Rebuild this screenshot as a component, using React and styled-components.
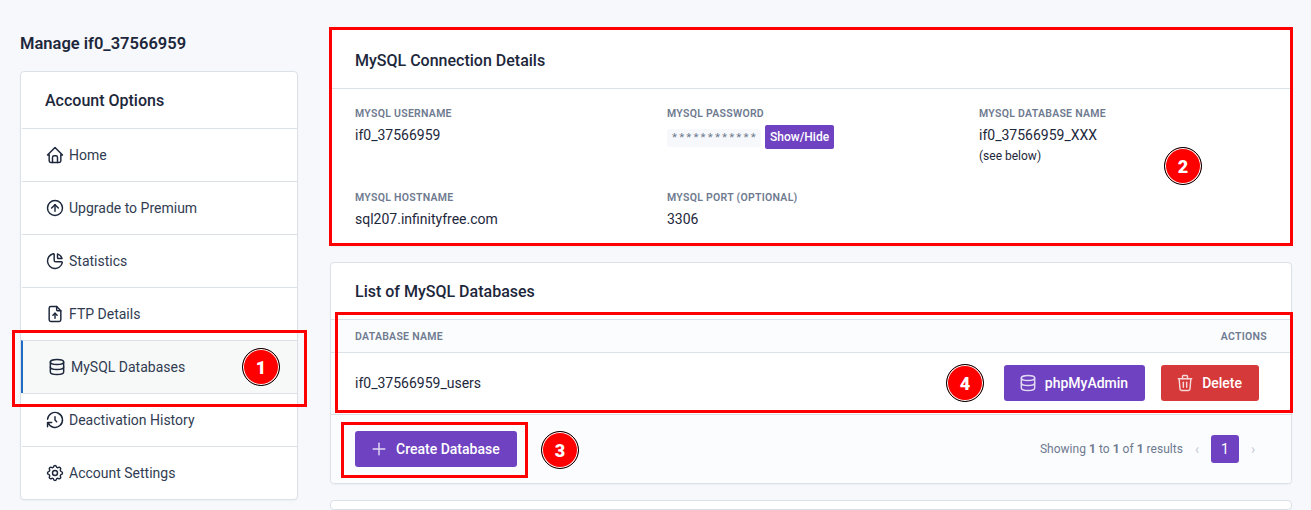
import React from 'react';
import styled, { createGlobalStyle } from 'styled-components';
import { TbHome, TbCircleArrowUp, TbChartPie, TbFileUpload, TbDatabase, TbHistory, TbSettings, TbTrash, TbPlus } from 'react-icons/tb';

const Global = createGlobalStyle`
  html, body { margin: 0; padding: 0; background: #f6f8fb; }
  body { font-family: Roboto, "Liberation Sans", sans-serif; color: #1d273b; }
  * { box-sizing: border-box; }
`

const Page = styled.div`
  position: relative;
  width: 1311px;
  height: 510px;
  overflow: hidden;
  display: flex;
  gap: 32px;
  padding: 28px 20px 0;
`
const Side = styled.aside`
  width: 278px;
  flex: none;
`
const Main = styled.main`
  width: 962px;
  flex: none;
  display: flex;
  flex-direction: column;
  gap: 16px;
`
const PageTitle = styled.h2`
  margin: 6px 0 17px;
  font-size: 16.5px;
  line-height: 20px;
  font-weight: 600;
  color: #1d273b;
`
const Card = styled.section`
  background: #fff;
  border: 1px solid #dce1e7;
  border-radius: 4px;
  box-shadow: 0 1px 2px rgba(29, 39, 59, 0.04);
`
const MenuHead = styled.div`
  height: 56px;
  padding: 0 24px;
  display: flex;
  align-items: center;
  font-size: 16px;
  font-weight: 500;
`
const MenuRow = styled.div`
  height: 53px;
  border-top: 1px solid #dce1e7;
  border-left: 2px solid ${p => (p.$active ? '#206bc4' : 'transparent')};
  background: ${p => (p.$active ? '#f7f9f9' : 'transparent')};
  padding-left: ${p => (p.$active ? '24px' : '22px')};
  display: flex;
  align-items: center;
  gap: 4px;
  font-size: 14px;
  color: #313c52;
  svg { color: #1d273b; flex: none; }
`
const CardHead = styled.div`
  height: ${p => p.$h || 60}px;
  padding: ${p => (p.$line ? '3px' : '0')} 24px 0;
  display: flex;
  align-items: center;
  font-size: 16px;
  font-weight: 500;
  color: #1d273b;
  border-bottom: ${p => (p.$line ? '1px solid #dce1e7' : 'none')};
`
const DetailGrid = styled.div`
  display: grid;
  grid-template-columns: 312px 312px 1fr;
  grid-auto-rows: 84px;
  padding: 18px 24px 0;
  height: 156px;
`
const Field = styled.div`
  display: flex;
  flex-direction: column;
`
const Label = styled.div`
  font-size: 10.5px;
  line-height: 14px;
  font-weight: 600;
  letter-spacing: 0.28px;
  color: #6e7a8f;
  text-transform: uppercase;
`
const Value = styled.div`
  font-size: 14px;
  line-height: 20px;
  margin-top: 4px;
  color: #1d273b;
`
const Note = styled.small`
  font-size: 12px;
  line-height: 16px;
  margin-top: 3px;
  color: #1d273b;
`
const PassRow = styled.div`
  display: flex;
  align-items: flex-start;
  gap: 4px;
  margin-top: 4px;
`
const Masked = styled.code`
  width: 94px;
  height: 18px;
  margin-top: 4px;
  padding: 0 5px;
  background: #f6f8fb;
  border-radius: 3px;
  font-family: Roboto, sans-serif;
  font-size: 11.5px;
  line-height: 16px;
  letter-spacing: 2.2px;
  color: #6e7a8f;
`
const SmallButton = styled.button`
  height: 24px;
  padding: 0 5px;
  border: 0;
  border-radius: 2px;
  background: #6f42c1;
  color: #fff;
  font: 500 12px Roboto, sans-serif;
`
const TableHead = styled.div`
  height: 34px;
  padding: 1px 24px 0;
  display: flex;
  align-items: center;
  justify-content: space-between;
  background: #fbfcfe;
  border-top: 1px solid #dce1e7;
  border-bottom: 1px solid #dce1e7;
`
const TableRow = styled.div`
  height: 62px;
  padding: 0 32px 1px 24px;
  display: flex;
  align-items: center;
  background: #fff;
  font-size: 14px;
  color: #1d273b;
  border-bottom: 1px solid #dce1e7;
`
const RowName = styled.span`
  flex: 1;
`
const Button = styled.button`
  height: 36px;
  padding: 0 17px 1px 14px;
  margin-left: ${p => p.$gap || 0}px;
  display: inline-flex;
  align-items: center;
  gap: 7px;
  border: 0;
  border-radius: 3px;
  background: ${p => p.$bg || '#6f42c1'};
  color: #fff;
  font: 500 14px Roboto, sans-serif;
  svg { flex: none; opacity: 0.8; }
`
const Footer = styled.div`
  height: 68px;
  padding: 0 24px;
  display: flex;
  align-items: center;
  justify-content: space-between;
  background: #fbfcfe;
  border-radius: 0 0 4px 4px;
`
const Pager = styled.div`
  display: flex;
  align-items: center;
  font-size: 12px;
  letter-spacing: 0.03px;
  color: #6e7a8f;
  b { font-weight: 700; }
`
const PageArrow = styled.span`
  width: 28px;
  text-align: center;
  font-size: 14px;
  color: #c5cbd5;
`
const PageNum = styled.span`
  width: 28px;
  height: 28px;
  display: flex;
  align-items: center;
  justify-content: center;
  background: #6f42c1;
  color: #fff;
  border-radius: 3px;
  font-size: 14px;
`
const EmptyCard = styled(Card)`
  height: 60px;
`
const Mark = styled.div`
  position: absolute;
  left: ${p => p.$x}px;
  top: ${p => p.$y}px;
  width: ${p => p.$w}px;
  height: ${p => p.$h}px;
  border: 3px solid #ff0000;
  pointer-events: none;
`
const Badge = styled.div`
  position: absolute;
  left: ${p => p.$x - 19}px;
  top: ${p => p.$y - 19}px;
  width: 38px;
  height: 38px;
  border-radius: 50%;
  background: #ff0000;
  border: 1px solid #000;
  box-shadow: inset 0 0 0 1px #fff;
  color: #fff;
  display: flex;
  align-items: center;
  justify-content: center;
  font: 900 18px Roboto, sans-serif;
`

const menu = [
    { label: 'Home', icon: TbHome },
    { label: 'Upgrade to Premium', icon: TbCircleArrowUp },
    { label: 'Statistics', icon: TbChartPie },
    { label: 'FTP Details', icon: TbFileUpload },
    { label: 'MySQL Databases', icon: TbDatabase, active: true },
    { label: 'Deactivation History', icon: TbHistory },
    { label: 'Account Settings', icon: TbSettings },
]

const App = () => {
    return <Page>
        <Global />
        <Side>
            <PageTitle>Manage if0_37566959</PageTitle>
            <Card>
                <MenuHead>Account Options</MenuHead>
                {menu.map(item => (
                    <MenuRow key={item.label} $active={item.active}>
                        <item.icon size={20} strokeWidth={1.75} />
                        {item.label}
                    </MenuRow>
                ))}
            </Card>
        </Side>
        <Main>
            <Card>
                <CardHead $line>MySQL Connection Details</CardHead>
                <DetailGrid>
                    <Field>
                        <Label>MySQL Username</Label>
                        <Value>if0_37566959</Value>
                    </Field>
                    <Field>
                        <Label>MySQL Password</Label>
                        <PassRow>
                            <Masked>************</Masked>
                            <SmallButton>Show/Hide</SmallButton>
                        </PassRow>
                    </Field>
                    <Field>
                        <Label>MySQL Database Name</Label>
                        <Value>if0_37566959_XXX</Value>
                        <Note>(see below)</Note>
                    </Field>
                    <Field>
                        <Label>MySQL Hostname</Label>
                        <Value>sql207.infinityfree.com</Value>
                    </Field>
                    <Field>
                        <Label>MySQL Port (Optional)</Label>
                        <Value>3306</Value>
                    </Field>
                </DetailGrid>
            </Card>
            <Card>
                <CardHead $h={56}>List of MySQL Databases</CardHead>
                <TableHead>
                    <Label>Database Name</Label>
                    <Label>Actions</Label>
                </TableHead>
                <TableRow>
                    <RowName>if0_37566959_users</RowName>
                    <Button><TbDatabase size={20} strokeWidth={1.75} />phpMyAdmin</Button>
                    <Button $bg="#d63939" $gap={16}><TbTrash size={20} strokeWidth={1.75} />Delete</Button>
                </TableRow>
                <Footer>
                    <Button><TbPlus size={20} strokeWidth={1.75} />Create Database</Button>
                    <Pager>
                        <span>Showing <b>1</b> to <b>1</b> of <b>1</b> results</span>
                        <PageArrow>‹</PageArrow>
                        <PageNum>1</PageNum>
                        <PageArrow>›</PageArrow>
                    </Pager>
                </Footer>
            </Card>
            <EmptyCard />
        </Main>
        <Mark $x={12} $y={330} $w={295} $h={77} />
        <Mark $x={329} $y={27} $w={964} $h={219} />
        <Mark $x={335} $y={312} $w={958} $h={101} />
        <Mark $x={341} $y={422} $w={187} $h={56} />
        <Badge $x={261} $y={367}>1</Badge>
        <Badge $x={1183} $y={166}>2</Badge>
        <Badge $x={560} $y={450}>3</Badge>
        <Badge $x={965} $y={383}>4</Badge>
    </Page>
}

export default App;
